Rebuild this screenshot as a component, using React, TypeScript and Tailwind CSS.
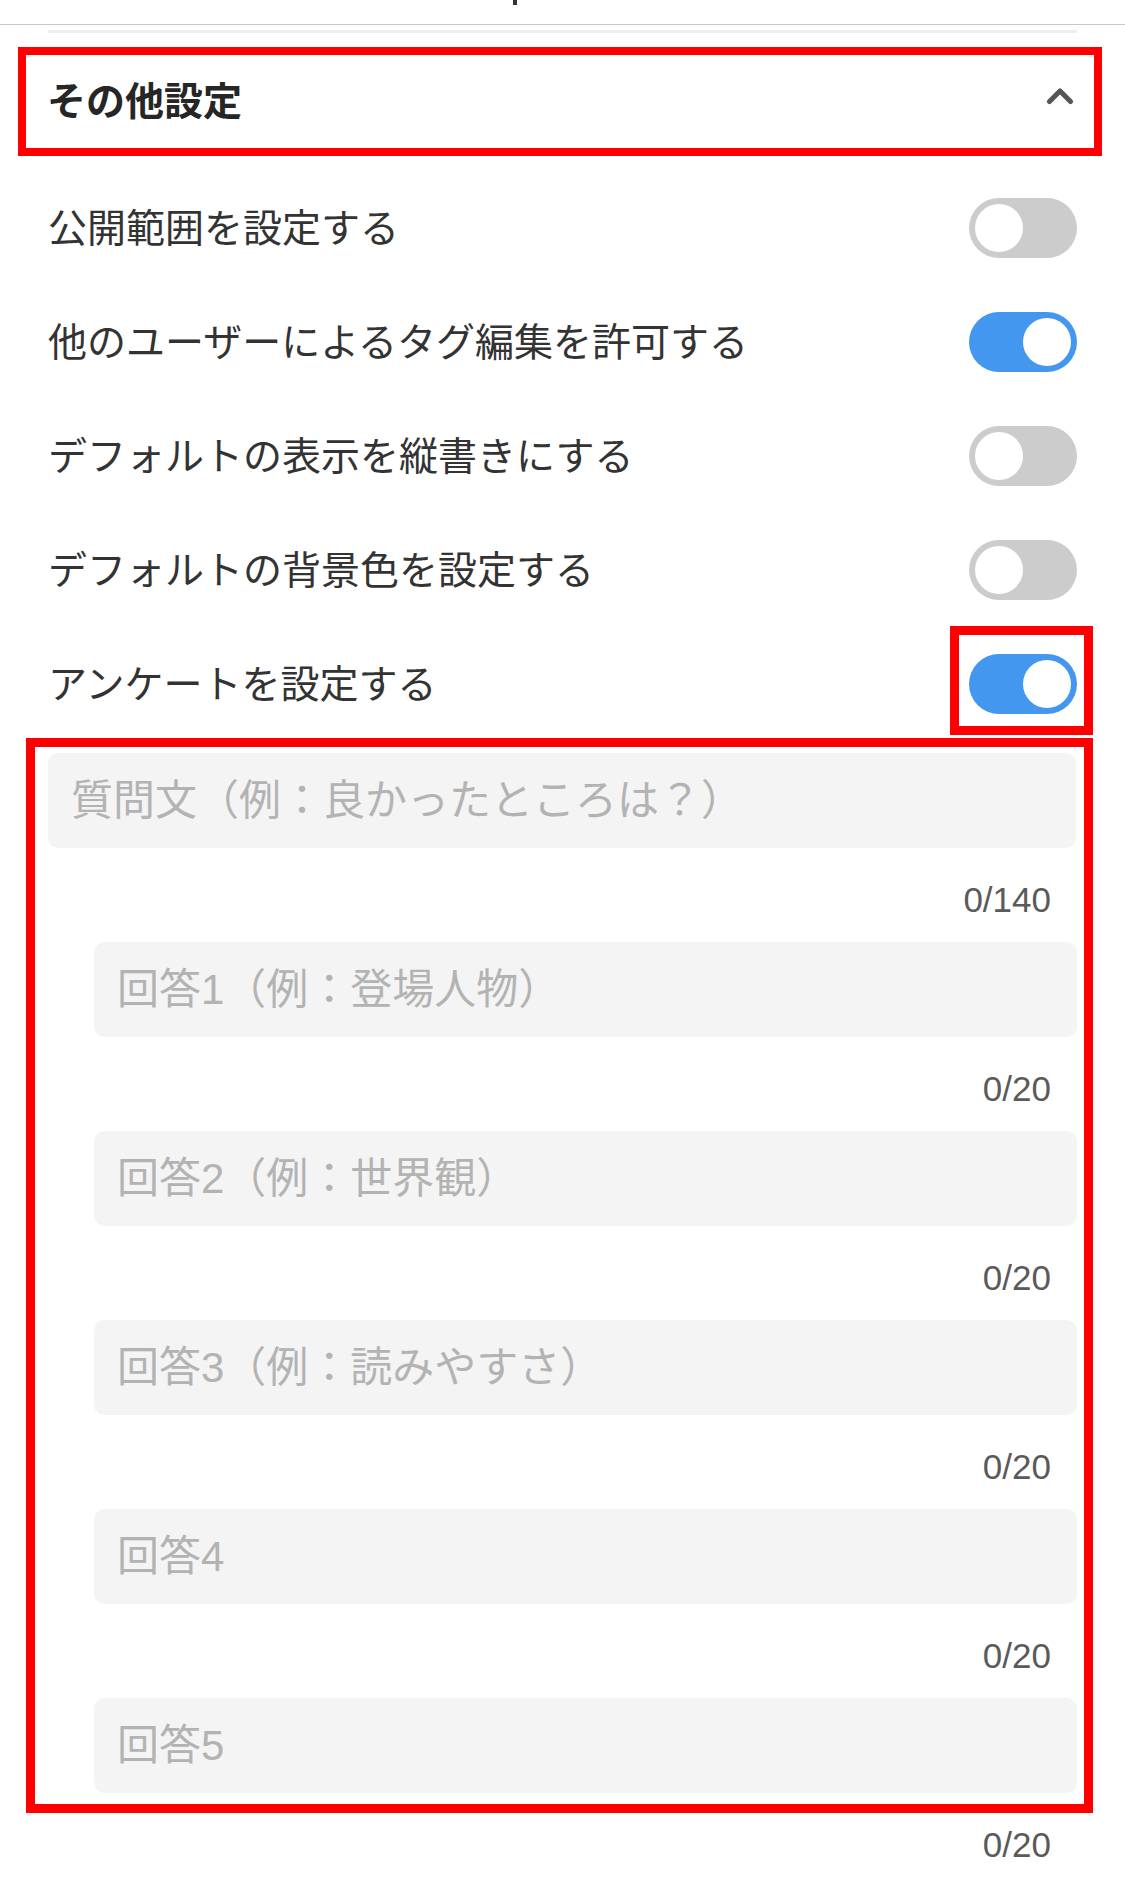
import React from "react";

const FONT = "font-['Liberation_Sans','Noto_Sans_CJK_JP',sans-serif]";

function Toggle({ on }: { on: boolean }) {
  return (
    <div
      className={
        on
          ? "flex h-[60px] w-[108px] shrink-0 items-center justify-end rounded-full bg-[#4497ef] pr-[6px]"
          : "flex h-[60px] w-[108px] shrink-0 items-center justify-start rounded-full bg-[#cccccc] pl-[6px]"
      }
    >
      <div className="h-[48px] w-[48px] rounded-full bg-white" />
    </div>
  );
}

function Row({ label, on, boxed }: { label: string; on: boolean; boxed?: boolean }) {
  return (
    <div className="flex h-[114px] items-center justify-between pl-[48px] pr-[48px]">
      <span className="text-[39px] leading-none text-[#333333]">{label}</span>
      <div className="relative">
        <Toggle on={on} />
        {boxed && (
          <div className="pointer-events-none absolute -left-[19px] -right-[16px] -top-[28px] -bottom-[21px] border-[9px] border-[#ff0000]" />
        )}
      </div>
    </div>
  );
}

function Field({ placeholder, max, indent }: { placeholder: string; max: number; indent?: boolean }) {
  return (
    <div>
      <div className={indent ? "pl-[94px] pr-[48px]" : "pl-[48px] pr-[49px]"}>
        <input
          readOnly
          placeholder={placeholder}
          className="block h-[95px] w-full rounded-[10px] bg-[#f4f4f4] pl-[23px] text-[42px] outline-none placeholder:text-[#b3b3b3]"
        />
      </div>
      <div className="h-[94px] pr-[74px] pt-[34px] text-right text-[35px] leading-[35px] text-[#5a5a5a]">
        0/{max}
      </div>
    </div>
  );
}

export default function App() {
  return (
    <div className={`min-h-[1880px] w-[1125px] overflow-hidden bg-white ${FONT}`}>
      <div className="h-[24px]">
        <div className="ml-[513px] h-[5px] w-[4px] bg-[#333333]" />
      </div>
      <div className="h-px bg-[#c8c8c8]" />
      <div className="mx-[48px] mt-[5px] h-[3px] bg-[#eeeeee]" />

      <div className="relative mt-[14px] flex h-[109px] items-center justify-between pl-[47px] pr-[51px]">
        <span className="text-[39px] font-bold leading-none text-[#262626]">その他設定</span>
        <svg width="28" height="18" viewBox="0 0 28 18" fill="none" className="mb-[12px]">
          <polyline
            points="3.5,14.5 14,4 24.5,14.5"
            stroke="#555555"
            strokeWidth="5"
            strokeLinecap="round"
            strokeLinejoin="round"
          />
        </svg>
        <div className="pointer-events-none absolute bottom-0 left-[18px] right-[23px] top-0 border-[8px] border-[#ff0000]" />
      </div>

      <div className="mt-[15px]">
        <Row label="公開範囲を設定する" on={false} />
        <Row label="他のユーザーによるタグ編集を許可する" on={true} />
        <Row label="デフォルトの表示を縦書きにする" on={false} />
        <Row label="デフォルトの背景色を設定する" on={false} />
        <Row label="アンケートを設定する" on={true} boxed />
      </div>

      <div className="relative pt-[12px]">
        <Field placeholder="質問文（例：良かったところは？）" max={140} />
        <Field placeholder="回答1（例：登場人物）" max={20} indent />
        <Field placeholder="回答2（例：世界観）" max={20} indent />
        <Field placeholder="回答3（例：読みやすさ）" max={20} indent />
        <Field placeholder="回答4" max={20} indent />
        <Field placeholder="回答5" max={20} indent />
        <div className="pointer-events-none absolute left-[26px] right-[32px] top-[-3px] h-[1075px] border-[9px] border-[#ff0000]" />
      </div>
    </div>
  );
}
